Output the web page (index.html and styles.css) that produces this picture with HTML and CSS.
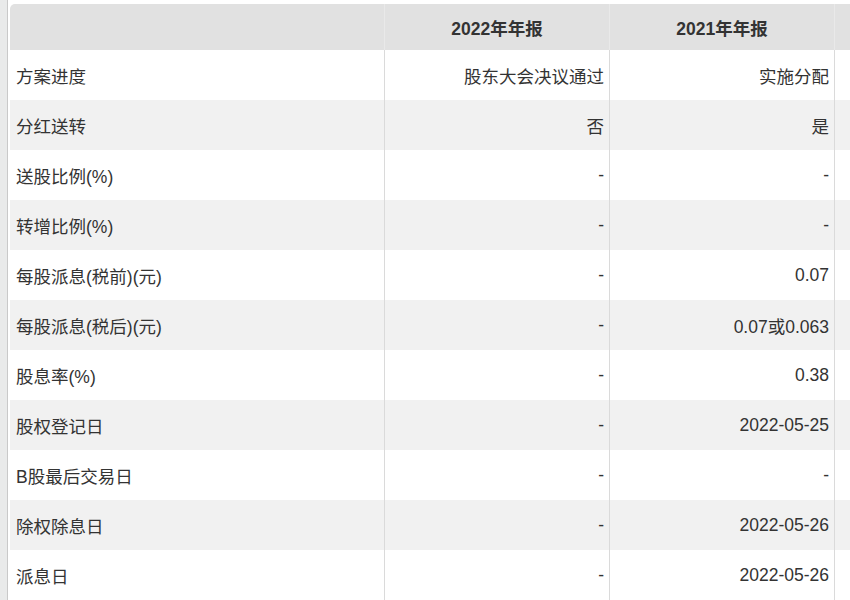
FILE: index.html
```html
<!DOCTYPE html>
<html>
<head>
<meta charset="utf-8">
<link rel="stylesheet" href="styles.css">
</head>
<body>
<div class="page">
  <div class="strip"></div>
  <div class="wrap">
    <table class="fin">
      <colgroup>
        <col class="c1"><col class="c2"><col class="c3"><col class="c4">
      </colgroup>
      <thead>
        <tr><th class="first"></th><th>2022年年报</th><th>2021年年报</th><th></th></tr>
      </thead>
      <tbody>
        <tr><td>方案进度</td><td>股东大会决议通过</td><td>实施分配</td><td></td></tr>
        <tr><td>分红送转</td><td>否</td><td>是</td><td></td></tr>
        <tr><td>送股比例(%)</td><td>-</td><td>-</td><td></td></tr>
        <tr><td>转增比例(%)</td><td>-</td><td>-</td><td></td></tr>
        <tr><td>每股派息(税前)(元)</td><td>-</td><td>0.07</td><td></td></tr>
        <tr><td>每股派息(税后)(元)</td><td>-</td><td>0.07或0.063</td><td></td></tr>
        <tr><td>股息率(%)</td><td>-</td><td>0.38</td><td></td></tr>
        <tr><td>股权登记日</td><td>-</td><td>2022-05-25</td><td></td></tr>
        <tr><td>B股最后交易日</td><td>-</td><td>-</td><td></td></tr>
        <tr><td>除权除息日</td><td>-</td><td>2022-05-26</td><td></td></tr>
        <tr><td>派息日</td><td>-</td><td>2022-05-26</td><td></td></tr>
      </tbody>
    </table>
  </div>
</div>
</body>
</html>
```

FILE: styles.css
```css
html, body {
  margin: 0;
  padding: 0;
  background: #ffffff;
  overflow: hidden;
  width: 850px;
  height: 600px;
}
.page {
  display: flex;
  width: 850px;
  height: 600px;
  overflow: hidden;
}
.strip {
  flex: 0 0 7px;
  background: #e9eaea;
  border-right: 1px solid #c9c9c9;
}
.wrap {
  flex: 0 0 auto;
  padding: 4px 0 0 2px;
}
.fin {
  border-collapse: separate;
  border-spacing: 0;
  table-layout: fixed;
  width: 1049px;
  font-family: "Liberation Sans", Arial, "Noto Sans CJK SC", sans-serif;
  font-size: 17.5px;
  color: #333333;
}
.c1 { width: 374px; }
.c2 { width: 225px; }
.c3 { width: 225px; }
.c4 { width: 225px; }
.fin th {
  height: 46px;
  padding: 0;
  background: #e1e1e1;
  font-weight: bold;
  text-align: center;
  color: #333;
  border-left: 1px solid #e9e9e9;
}
.fin th.first {
  border-left: none;
  border-top-left-radius: 5px;
}
.fin td {
  height: 50px;
  padding: 0 5px;
  text-align: right;
  border-left: 1px solid #dadada;
  box-sizing: border-box;
}
.fin td:first-child {
  text-align: left;
  border-left: none;
  padding-left: 6px;
}
.fin tbody tr:nth-child(even) td {
  background: #f1f1f1;
}
```
